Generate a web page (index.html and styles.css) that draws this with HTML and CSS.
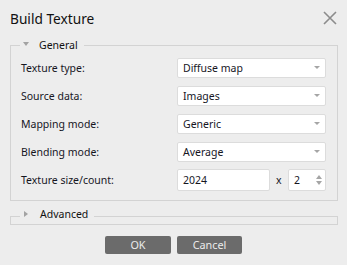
FILE: index.html
```html
<!DOCTYPE html>
<html>
<head>
<meta charset="utf-8">
<link rel="stylesheet" href="styles.css">
</head>
<body>
<div class="dialog">
  <div class="titlebar">
    <span class="title">Build Texture</span>
    <svg class="close" width="14" height="14" viewBox="0 0 14 14"><path d="M1 1L13 13M13 1L1 13" stroke="#8c8c8c" stroke-width="1.6" fill="none"/></svg>
  </div>

  <div class="group">
    <div class="group-head">
      <span class="edge-l"></span>
      <span class="tri-down"></span>
      <span class="legend">General</span>
      <span class="edge-r"></span>
    </div>
    <div class="group-body form">
      <span class="label">Texture type:</span>
      <div class="combo"><span>Diffuse map</span><i class="arrow"></i></div>
      <span class="label">Source data:</span>
      <div class="combo"><span>Images</span><i class="arrow"></i></div>
      <span class="label">Mapping mode:</span>
      <div class="combo"><span>Generic</span><i class="arrow"></i></div>
      <span class="label">Blending mode:</span>
      <div class="combo"><span>Average</span><i class="arrow"></i></div>
      <span class="label size-label">Texture size/count:</span>
      <div class="size-row">
        <div class="field">2024</div>
        <span class="times">x</span>
        <div class="field spin"><span>2</span>
          <span class="spin-arrows"><i class="up"></i><i class="down"></i></span>
        </div>
      </div>
    </div>
  </div>

  <div class="group adv">
    <div class="group-head">
      <span class="edge-l"></span>
      <span class="tri-right"></span>
      <span class="legend">Advanced</span>
      <span class="edge-r"></span>
    </div>
    <div class="group-body"></div>
  </div>

  <div class="buttons">
    <button class="btn ok">OK</button>
    <button class="btn cancel">Cancel</button>
  </div>
</div>
</body>
</html>
```

FILE: styles.css
```css
html, body {
  margin: 0;
  padding: 0;
  background: #ededed;
}
body {
  font-family: "Segoe UI", "Noto Sans", "Open Sans", sans-serif;
  font-size: 10.5px;
  color: #16161f;
}
.dialog {
  width: 347px;
  height: 265px;
  box-sizing: border-box;
}
.titlebar {
  height: 36px;
  display: flex;
  align-items: center;
  justify-content: space-between;
  padding: 0 10px 0 10px;
  box-sizing: border-box;
}
.title {
  font-size: 13.7px;
  color: #111;
}
.close {
  display: block;
}
.group {
  margin: 1px 9px 0 10px;
}
.group-head {
  display: flex;
  height: 16px;
  align-items: center;
}
.edge-l {
  align-self: flex-end;
  width: 10px;
  height: 8px;
  border-left: 1px solid #d3d3d3;
  border-top: 1px solid #d3d3d3;
  box-sizing: border-box;
}
.edge-r {
  align-self: flex-end;
  flex: 1;
  height: 8px;
  border-right: 1px solid #d3d3d3;
  border-top: 1px solid #d3d3d3;
  box-sizing: border-box;
  margin-left: 6px;
}
.tri-down {
  width: 0;
  height: 0;
  border-left: 3.5px solid transparent;
  border-right: 3.5px solid transparent;
  border-top: 4px solid #a3a3a3;
  margin-left: 3px;
  margin-right: 10px;
  margin-top: -2px;
}
.tri-right {
  width: 0;
  height: 0;
  border-top: 3.5px solid transparent;
  border-bottom: 3.5px solid transparent;
  border-left: 4px solid #a3a3a3;
  margin-left: 4px;
  margin-right: 12px;
}
.legend {
  line-height: 16px;
  color: #111;
}
.group-body {
  border-left: 1px solid #d3d3d3;
  border-right: 1px solid #d3d3d3;
  border-bottom: 1px solid #d3d3d3;
}
.form {
  display: grid;
  grid-template-columns: 156px 149px;
  row-gap: 8px;
  padding: 5px 10px 9px 10px;
  align-items: center;
}
.label {
  line-height: 20px;
}
.combo {
  height: 20px;
  box-sizing: border-box;
  background: #fff;
  border: 1px solid #dcdcdc;
  border-radius: 2px;
  display: flex;
  align-items: center;
  justify-content: space-between;
  padding: 0 5px 0 5px;
}
.arrow {
  width: 0;
  height: 0;
  border-left: 3.5px solid transparent;
  border-right: 3.5px solid transparent;
  border-top: 3.5px solid #a5a5a5;
  margin-top: -2px;
}
.size-label {
  margin-top: -1px;
}
.size-row {
  display: grid;
  grid-template-columns: 93px 18px 38px;
  align-items: center;
  margin-top: -1px;
}
.field {
  height: 22px;
  box-sizing: border-box;
  background: #fff;
  border: 1px solid #dcdcdc;
  border-radius: 2px;
  display: flex;
  align-items: center;
  padding: 0 5px;
}
.times {
  padding-left: 6px;
}
.spin {
  justify-content: space-between;
  padding-right: 3px;
}
.spin-arrows {
  display: flex;
  flex-direction: column;
  gap: 2px;
}
.spin-arrows .up {
  width: 0; height: 0;
  border-left: 3.5px solid transparent;
  border-right: 3.5px solid transparent;
  border-bottom: 4px solid #a5a5a5;
}
.spin-arrows .down {
  width: 0; height: 0;
  border-left: 3.5px solid transparent;
  border-right: 3.5px solid transparent;
  border-top: 4px solid #a5a5a5;
}
.adv {
  margin-top: 5px;
}
.adv .edge-l, .adv .edge-r {
  height: 6px;
}
.adv .group-body {
  height: 2px;
}
.buttons {
  display: flex;
  justify-content: center;
  gap: 6px;
  margin-top: 11px;
}
.btn {
  height: 18px;
  border: none;
  border-radius: 2px;
  background: #6b6b6b;
  color: #ececec;
  font-family: inherit;
  font-size: 10.8px;
  padding: 0;
  line-height: 18px;
}
.ok { width: 66px; }
.cancel { width: 65px; }
```
